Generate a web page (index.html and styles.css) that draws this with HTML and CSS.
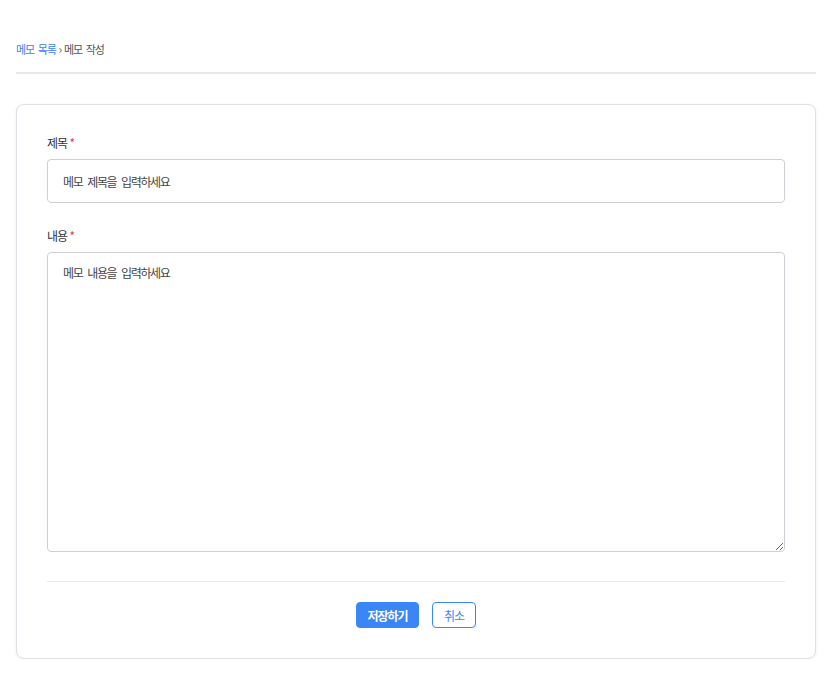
FILE: index.html
```html
<!DOCTYPE html>
<html lang="ko">
<head>
<meta charset="utf-8">
<title>메모 작성</title>
<link rel="stylesheet" href="styles.css">
</head>
<body>
<div class="page">
  <header class="header">
    <nav class="breadcrumb">
      <a class="crumb-link" href="#">메모 목록</a>
      <span class="crumb-sep">›</span>
      <span class="crumb-current">메모 작성</span>
    </nav>
  </header>
  <main class="card">
    <div class="field">
      <label class="label" for="title">제목 <span class="req">*</span></label>
      <input class="input" id="title" type="text" placeholder="메모 제목을 입력하세요">
    </div>
    <div class="field">
      <label class="label" for="content">내용 <span class="req">*</span></label>
      <textarea class="textarea" id="content" placeholder="메모 내용을 입력하세요"></textarea>
    </div>
    <div class="actions">
      <button class="btn btn-primary" type="button">저장하기</button>
      <button class="btn btn-outline" type="button">취소</button>
    </div>
  </main>
</div>
</body>
</html>
```
FILE: styles.css
```css
* { box-sizing: border-box; }
html, body { margin: 0; padding: 0; background: #fff; }
body {
  font-family: "Noto Sans CJK KR", "Noto Sans", sans-serif;
  color: #333;
}
.page { padding: 0 16px; max-width: 832px; }
.header {
  padding: 40px 0 14px;
  border-bottom: 2px solid #e6e8eb;
}
.breadcrumb {
  height: 18px;
  line-height: 18px;
  font-size: 11px;
  letter-spacing: -1.2px;
  display: flex;
  align-items: center;
  gap: 3px;
}
.crumb-link { color: #3b82f6; text-decoration: none; word-spacing: 2px; }
.crumb-sep { color: #666; font-size: 12px; }
.crumb-current { color: #555; word-spacing: 2px; }
.card {
  margin-top: 30px;
  border: 1px solid #dcdfe3;
  border-radius: 8px;
  padding: 30px 30px 30px;
  box-shadow: 0 1px 4px rgba(0,0,0,0.06);
  background: #fff;
}
.field { margin-bottom: 25px; }
.field:last-of-type { margin-bottom: 0; }
.label {
  display: block;
  font-size: 12px;
  line-height: 16px;
  letter-spacing: -1px;
  color: #333;
  margin-bottom: 8px;
}
.req { color: #e53e3e; }
.input, .textarea {
  display: block;
  width: 100%;
  border: 1px solid #ccd0d5;
  border-radius: 4px;
  font-family: inherit;
  font-size: 12px;
  letter-spacing: -1.4px;
  word-spacing: 3px;
  color: #333;
  background: #fff;
  outline: none;
}
.input {
  height: 44px;
  padding: 0 15px;
}
.textarea {
  height: 300px;
  padding: 11px 15px;
  line-height: 18px;
  resize: vertical;
}
.input::placeholder, .textarea::placeholder { color: #444; opacity: 1; }
.actions {
  margin-top: 29px;
  border-top: 1px solid #e6e8eb;
  padding-top: 20px;
  display: flex;
  justify-content: center;
  gap: 13px;
}
.btn {
  height: 26px;
  border-radius: 4px;
  font-family: inherit;
  font-size: 12px;
  letter-spacing: -1px;
  padding: 0;
  cursor: pointer;
}
.btn-primary {
  width: 63px;
  background: #3b86f7;
  border: 1px solid #3b86f7;
  color: #fff;
  font-weight: 700;
}
.btn-outline {
  width: 44px;
  background: #fff;
  border: 1px solid #3b86f7;
  color: #3b86f7;
}
```
